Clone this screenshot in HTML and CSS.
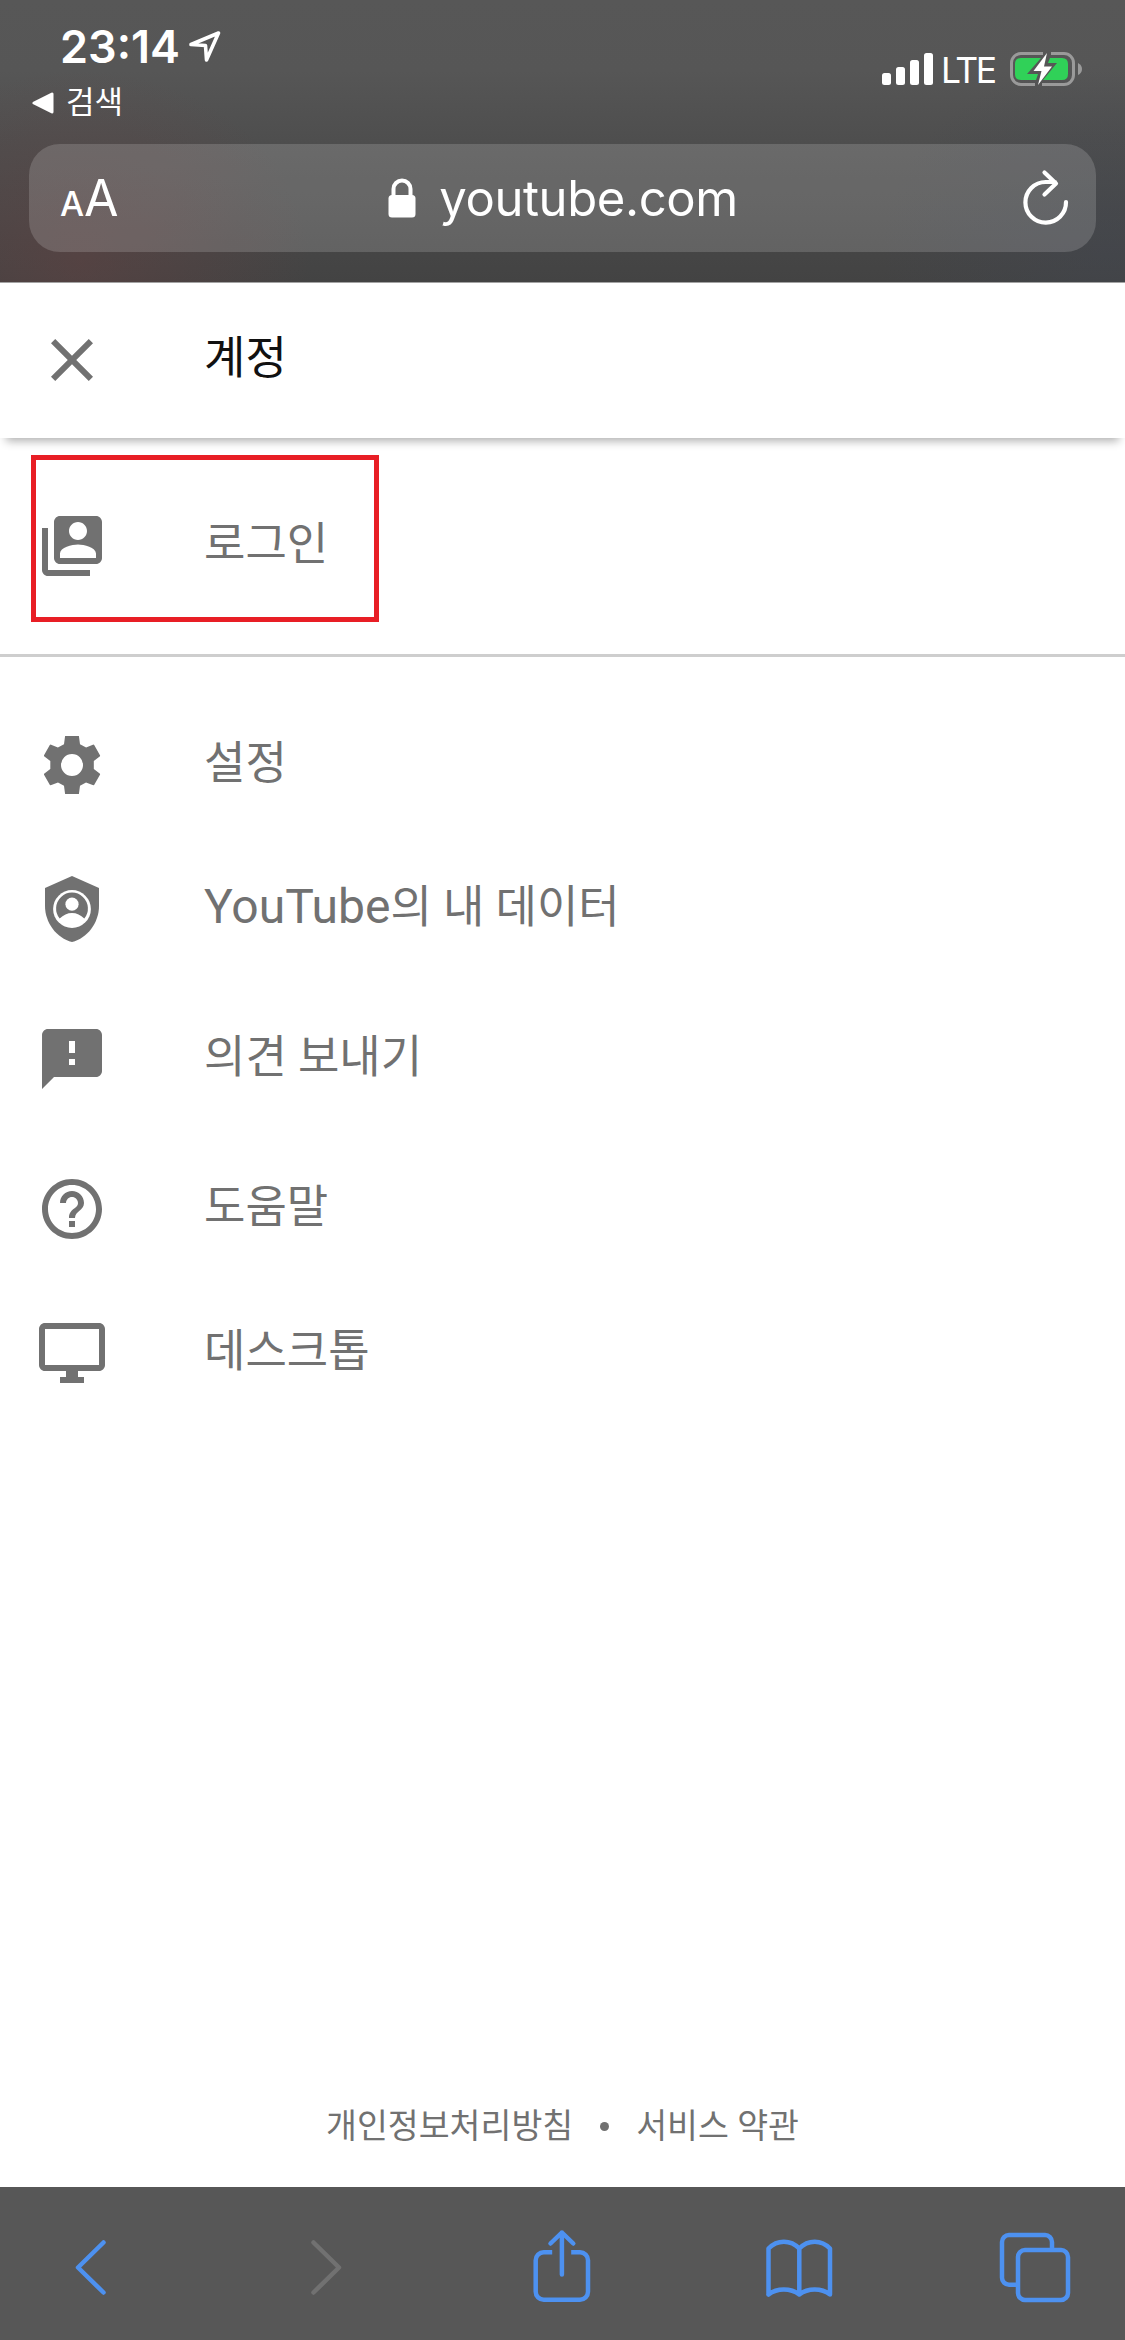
FILE: index.html
```html
<!DOCTYPE html>
<html lang="ko">
<head>
<meta charset="utf-8">
<title>계정</title>
<link rel="stylesheet" href="styles.css">
</head>
<body>
<div class="screen">
  <header class="browser-top">
    <div class="status">
      <div class="status-left">
        <div class="clock">
          <span class="time">23:14</span>
          <svg class="location" width="34" height="34" viewBox="0 0 34 34"><path d="M3 14.5 30.5 3 18.5 30 17.5 15.5Z" fill="none" stroke="#fff" stroke-width="3.6" stroke-linejoin="round"/></svg>
        </div>
        <div class="return">
          <svg width="22" height="22" viewBox="0 0 22 22"><path d="M2 11 20 2V20Z" fill="#fff" stroke="#fff" stroke-width="3" stroke-linejoin="round"/></svg>
          <span>검색</span>
        </div>
      </div>
      <div class="status-right">
        <svg width="51" height="32" viewBox="0 0 51 32" fill="#fff"><rect y="20" width="9" height="12" rx="2.5"/><rect x="14" y="14" width="9" height="18" rx="2.5"/><rect x="28" y="7" width="9" height="25" rx="2.5"/><rect x="42" width="9" height="32" rx="2.5"/></svg>
        <span class="network">LTE</span>
        <svg width="74" height="36" viewBox="0 0 74 36">
          <path d="M34 2.5H12a9.5 9.5 0 0 0-9.500 9.500V24A9.500 9.500 0 0 0 12 33.500H26M42 2.500H55A9.500 9.500 0 0 1 64.500 12V24A9.500 9.500 0 0 1 55 33.500H33" fill="none" stroke="#9a9a9a" stroke-width="3"/>
          <path d="M69 12q4 2 4 6t-4 6z" fill="#9a9a9a"/>
          <path d="M32 7H12Q6 7 6 13V23Q6 29 12 29H27L29 23H18ZM41 7H53Q59 7 59 13V23Q59 29 53 29H34L48 12H39Z" fill="#30d158"/>
          <path d="M38 2 24.500 20H32.500L29 34 43 15.500H35Z" fill="#fff"/>
        </svg>
      </div>
    </div>
    <div class="address">
      <div class="reader"><span class="small-a">A</span><span class="big-a">A</span></div>
      <div class="domain">
        <svg width="28" height="40" viewBox="0 0 28 40"><path d="M5.500 18V11a8.500 8.500 0 0 1 17 0V18" fill="none" stroke="#fff" stroke-width="4"/><rect x=".5" y="17" width="27" height="22.500" rx="3.500" fill="#fff"/></svg>
        <span>youtube.com</span>
      </div>
      <svg class="reload" width="48" height="58" viewBox="0 0 48 58" fill="none" stroke="#fff" stroke-width="4.200" stroke-linecap="round" stroke-linejoin="round"><path d="M44 33A20.300 20.300 0 1 1 23.700 13H33M22.500 3.500 34 14.500 22.500 25.500"/></svg>
    </div>
  </header>

  <main class="page">
    <div class="title-bar">
      <svg class="icon" viewBox="0 0 24 24"><path d="M19 6.410 17.590 5 12 10.590 6.410 5 5 6.410 10.590 12 5 17.590 6.410 19 12 13.410 17.590 19 19 17.590 13.410 12z"/></svg>
      <h1>계정</h1>
    </div>
    <nav class="group sign-in">
      <a class="item">
        <svg class="icon" viewBox="0 0 24 24"><path d="M4 6H2v14c0 1.100.9 2 2 2h14v-2H4V6zm16-4H8c-1.100 0-2 .9-2 2v12c0 1.100.9 2 2 2h12c1.100 0 2-.9 2-2V4c0-1.100-.9-2-2-2zm-6 2c1.660 0 3 1.340 3 3s-1.340 3-3 3-3-1.340-3-3 1.340-3 3-3zm6 12H8v-1.500c0-1.990 4-3 6-3s6 1.010 6 3V16z"/></svg>
        <span class="label">로그인</span>
      </a>
      <div class="highlight"></div>
    </nav>
    <nav class="group">
      <a class="item">
        <svg class="icon" viewBox="0 0 24 24"><path fill-rule="evenodd" d="M9.700 2.330H14.300L14.670 5.070 16.700 6.200 19.170 5.200 19.400 5.330 21.370 8.830 21.330 9.100 19.270 10.700V13.300L21.330 14.930 21.370 15.170 19.370 18.670 19.100 18.770 16.670 17.800 14.670 18.930 14.300 21.670H9.700L9.330 18.930 7.330 17.800 4.900 18.770 4.630 18.670 2.630 15.170 2.700 14.930 4.770 13.300V10.700L2.700 9.100 2.630 8.830 4.600 5.330 4.830 5.200 7.300 6.200 9.330 5.070ZM12 8.330A3.670 3.670 0 1 0 12 15.670 3.670 3.670 0 1 0 12 8.330Z"/></svg>
        <span class="label">설정</span>
      </a>
      <a class="item">
        <svg class="icon" viewBox="0 0 24 24"><path d="M12 1 3 5v6c0 5.550 3.840 10.740 9 12 5.160-1.260 9-6.450 9-12V5z"/><circle cx="12" cy="12" r="6.300" fill="#fff"/><path d="M7.900 15.200A5.300 5.300 0 1 1 16.100 15.200Q14.300 13.300 12 13.300T7.900 15.200Z"/><circle cx="12" cy="10.400" r="2.200" fill="#fff"/></svg>
        <span class="label"><span class="latin">YouTube</span>의 내 데이터</span>
      </a>
      <a class="item spaced">
        <svg class="icon" viewBox="0 0 24 24"><path d="M20 2H4c-1.100 0-1.990.9-1.990 2L2 22l4-4h14c1.100 0 2-.9 2-2V4c0-1.100-.9-2-2-2zm-7 12h-2v-2h2v2zm0-4h-2V6h2v4z"/></svg>
        <span class="label">의견 보내기</span>
      </a>
      <a class="item spaced">
        <svg class="icon" viewBox="0 0 24 24"><path d="M11 18h2v-2h-2v2zm1-16C6.480 2 2 6.480 2 12s4.480 10 10 10 10-4.480 10-10S17.520 2 12 2zm0 18c-4.410 0-8-3.590-8-8s3.590-8 8-8 8 3.590 8 8-3.590 8-8 8zm0-14c-2.210 0-4 1.790-4 4h2c0-1.100.9-2 2-2s2 .9 2 2c0 2-3 1.750-3 5h2c0-2.250 3-2.500 3-5 0-2.210-1.790-4-4-4z"/></svg>
        <span class="label">도움말</span>
      </a>
      <a class="item">
        <svg class="icon" viewBox="0 0 24 24"><path d="M21 2H3c-1.100 0-2 .9-2 2v12c0 1.100.9 2 2 2h7v2H8v2h8v-2h-2v-2h7c1.100 0 2-.9 2-2V4c0-1.100-.9-2-2-2zm0 14H3V4h18v12z"/></svg>
        <span class="label">데스크톱</span>
      </a>
    </nav>
    <footer class="legal"><a>개인정보처리방침</a><i class="dot"></i><a>서비스 약관</a></footer>
  </main>

  <nav class="toolbar">
    <svg viewBox="0 0 80 153"><path d="M53.500 55.500 28 80.500 53.500 105.500"/></svg>
    <svg class="disabled" viewBox="0 0 80 153"><path d="M27.500 55.500 53 80.500 27.500 105.500"/></svg>
    <svg viewBox="0 0 80 153"><path stroke-linecap="butt" d="M29.200 65.300H20.700a8 8 0 0 0-8 8V104.700a8 8 0 0 0 8 8H57a8 8 0 0 0 8-8V73.300a8 8 0 0 0-8-8H48.200"/><path d="M38.900 87.500V45.500M27.500 56.500 38.900 45.500 50.300 56.500"/></svg>
    <svg viewBox="0 0 80 153"><path d="M9.500 107.500V61.500Q16 54.700 24.900 54.700T40.300 61.500Q46.800 54.700 55.700 54.700T71 61.500V107.500Q64.600 102.500 55.700 102.500T40.300 107.500Q33.800 102.500 24.900 102.500T9.500 107.500M40.300 61.500V107.500"/></svg>
    <svg viewBox="0 0 80 153"><path stroke-linecap="butt" d="M57 63V55a7 7 0 0 0-7-7H14a7 7 0 0 0-7 7V90.700a7 7 0 0 0 7 7H23"/><rect x="23" y="63" width="50" height="50" rx="7"/></svg>
  </nav>
</div>
</body>
</html>
```
FILE: styles.css
```css
* { box-sizing: border-box; }
body { margin: 0; background: #fff; }
svg { display: block; flex: none; }
.screen {
  width: 1125px;
  height: 2340px;
  display: flex;
  flex-direction: column;
  font-family: Roboto, "Noto Sans CJK KR", sans-serif;
}

/* Browser chrome */
.browser-top {
  height: 283px;
  flex: none;
  border-bottom: 1px solid #a3a3a3;
  background:
    radial-gradient(ellipse 230px 190px at 80px 260px, rgba(106, 64, 64, .42), rgba(106, 64, 64, 0)),
    radial-gradient(ellipse 230px 190px at 1110px 250px, rgba(64, 70, 82, .4), rgba(64, 70, 82, 0)),
    linear-gradient(#575757 0, #565656 25%, #4e4e4e 50%, #434343 100%);
  color: #fff;
  font-family: Inter, "Noto Sans CJK KR", sans-serif;
}
.status {
  height: 144px;
  display: flex;
  justify-content: space-between;
}
.status-left { padding-top: 24px; }
.clock { display: flex; align-items: flex-start; gap: 8px; padding-left: 60px; height: 60px; }
.time { font-size: 45px; line-height: 46px; font-weight: 600; }
.location { margin-top: 6px; }
.return { display: flex; align-items: center; gap: 12px; padding-left: 32px; height: 38px; font-size: 31px; line-height: 38px; }
.return span { padding-bottom: 2px; }
.status-right { display: flex; align-items: center; height: 36px; margin-top: 51px; padding-right: 42px; }
.network { width: 53px; font-size: 35.500px; line-height: 36px; letter-spacing: -2.400px; margin: 3px 15px 0 8px; }
.address {
  margin: 0 29px;
  height: 108px;
  border-radius: 31px;
  background: rgba(255, 255, 255, .16);
  display: grid;
  grid-template-columns: 1fr auto 1fr;
  align-items: center;
  padding: 0 28px 0 31px;
}
.reader { display: flex; align-items: baseline; line-height: 50px; padding-top: 5px; }
.small-a { font-size: 34px; font-weight: 500; }
.big-a { font-size: 50px; }
.domain { display: flex; align-items: center; gap: 23px; font-size: 49px; line-height: 60px; letter-spacing: -.400px; padding-right: 2px; }
.domain span { padding-top: 2px; }
.reload { justify-self: end; margin-right: -2px; }

/* Account page */
.page { flex: 1; min-height: 0; display: flex; flex-direction: column; color: #717171; }
.icon { width: 72px; height: 72px; fill: currentColor; }
.title-bar, .item {
  display: flex;
  align-items: center;
  gap: 96px;
  padding-left: 36px;
  font-size: 45px;
  line-height: 60px;
}
.title-bar { height: 155px; padding-bottom: 1px; box-shadow: 0 9px 9px -6px rgba(0, 0, 0, .32); }
.title-bar h1 { margin: 0; padding-bottom: 3px; font-size: inherit; font-weight: 400; color: #111; }
.group { padding: 36px 0; position: relative; }
.sign-in { border-bottom: 3px solid #cecece; }
.item { height: 144px; }
.label { padding-bottom: 2px; }
.latin { font-size: 48px; line-height: 1; }
.spaced { margin-top: 6px; }
.highlight {
  position: absolute;
  left: 31px;
  top: 17px;
  width: 348px;
  height: 167px;
  border: 5px solid #e81e25;
}
.legal {
  margin-top: auto;
  height: 122px;
  display: flex;
  justify-content: center;
  align-items: center;
  gap: 27px;
  font-size: 33.600px;
  line-height: 40px;
}
.legal a { padding-top: 1px; }
.dot { width: 9px; height: 9px; border-radius: 50%; background: currentColor; }

.toolbar { height: 153px; flex: none; display: flex; justify-content: space-between; padding: 0 50px; background: #575757; }
.toolbar svg { width: 80px; height: 153px; fill: none; stroke: #4d91f0; stroke-width: 4.500; stroke-linecap: round; stroke-linejoin: round; }
.toolbar .disabled { stroke: #717171; }
```
